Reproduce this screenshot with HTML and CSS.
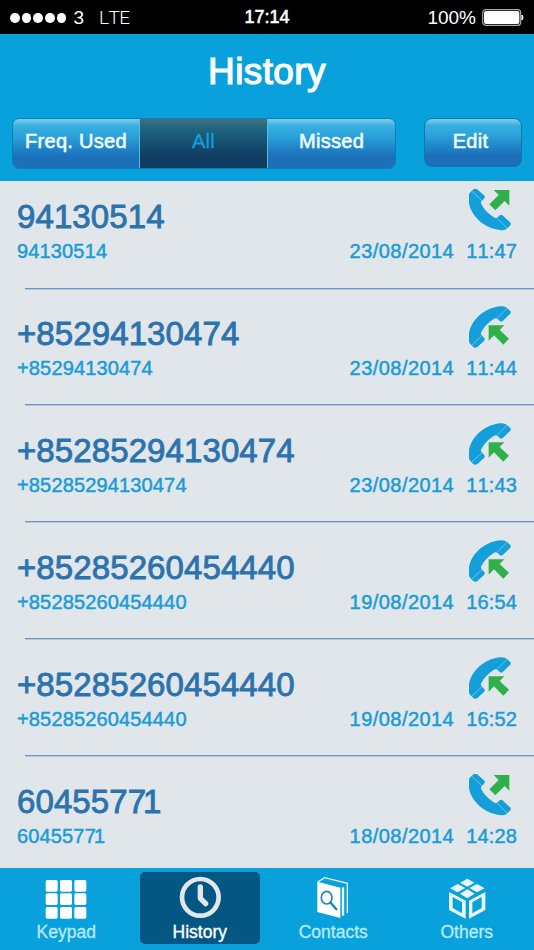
FILE: index.html
```
<!DOCTYPE html>
<html lang="en">
<head>
    <meta charset="UTF-8">
    <meta name="viewport" content="width=device-width, initial-scale=1.0">
    <title>History</title>
    <link rel="stylesheet" href="styles.css">
</head>
<body>
    <!-- shared call icons -->
    <svg class="defs" width="0" height="0">
        <symbol id="call-out" viewBox="0 0 126 126">
            <path fill="#149fda" d="M12 2Q19-4 26 2L45 19Q50 24 45 29L38 36Q34 40 37 46Q48 68 74 85Q81 90 86 85L92 79Q97 75 102 80L123 100Q128 105 123 110L113 119Q106 125 92 123C38 116-3 72-1 26Q-1 15 4 10Z"/>
            <path stroke="#9fd3ec" stroke-width="2" d="M9 7L39 35M84 87L114 117"/>
            <path fill="#2fb04a" d="M74 3H121V50L107 36L79 64L61 46L89 18Z"/>
        </symbol>
        <symbol id="call-in" viewBox="0 0 126 126">
            <path fill="#149fda" d="M12 122Q19 128 26 122L45 105Q50 100 45 95L38 88Q34 84 37 78Q48 56 74 39Q81 34 86 39L92 45Q97 49 102 44L123 24Q128 19 123 14L113 5Q106-1 92 1C38 8-3 52-1 98Q-1 109 4 114Z"/>
            <path stroke="#9fd3ec" stroke-width="2" d="M9 117L39 89M84 37L114 7"/>
            <path fill="#2fb04a" d="M59 58H106L92 72L120 98L103 116L75 88L59 104Z"/>
        </symbol>
    </svg>

    <div class="status-bar">
        <div class="signal">
            <i></i><i></i><i></i><i></i><i></i>
            <span class="carrier">3</span>
            <span class="network">LTE</span>
        </div>
        <div class="clock">17:14</div>
        <div class="power">
            <span>100%</span>
            <svg width="42" height="17" viewBox="0 0 42 17">
                <rect x=".7" y=".7" width="38" height="15.6" rx="3" fill="none" stroke="#aaa" stroke-width="1.2"/>
                <rect x="2" y="2" width="35.4" height="13" rx="2" fill="#fff"/>
                <path d="M40 6Q42 8.500 40 11Z" fill="#fff" stroke="#fff"/>
            </svg>
        </div>
    </div>

    <header>
        <h1>History</h1>
        <div class="toolbar">
            <div class="segments">
                <button class="segment">Freq. Used</button>
                <button class="segment selected">All</button>
                <button class="segment">Missed</button>
            </div>
            <button class="edit">Edit</button>
        </div>
    </header>

    <main>
        <div class="call">
            <div class="who">
                <div class="name">94130514</div>
                <div class="number">94130514</div>
            </div>
            <div class="when">
                <svg class="direction"><use href="#call-out"/></svg>
                <div class="stamp"><span class="date">23/08/2014</span><span>11:47</span></div>
            </div>
        </div>
        <div class="call">
            <div class="who">
                <div class="name">+85294130474</div>
                <div class="number">+85294130474</div>
            </div>
            <div class="when">
                <svg class="direction"><use href="#call-in"/></svg>
                <div class="stamp"><span class="date">23/08/2014</span><span>11:44</span></div>
            </div>
        </div>
        <div class="call">
            <div class="who">
                <div class="name">+85285294130474</div>
                <div class="number">+85285294130474</div>
            </div>
            <div class="when">
                <svg class="direction"><use href="#call-in"/></svg>
                <div class="stamp"><span class="date">23/08/2014</span><span>11:43</span></div>
            </div>
        </div>
        <div class="call">
            <div class="who">
                <div class="name">+85285260454440</div>
                <div class="number">+85285260454440</div>
            </div>
            <div class="when">
                <svg class="direction"><use href="#call-in"/></svg>
                <div class="stamp"><span class="date">19/08/2014</span><span>16:54</span></div>
            </div>
        </div>
        <div class="call">
            <div class="who">
                <div class="name">+85285260454440</div>
                <div class="number">+85285260454440</div>
            </div>
            <div class="when">
                <svg class="direction"><use href="#call-in"/></svg>
                <div class="stamp"><span class="date">19/08/2014</span><span>16:52</span></div>
            </div>
        </div>
        <div class="call">
            <div class="who">
                <div class="name">604557<span class="kern">7</span>1</div>
                <div class="number">604557<span class="kern">7</span>1</div>
            </div>
            <div class="when">
                <svg class="direction"><use href="#call-out"/></svg>
                <div class="stamp"><span class="date">18/08/2014</span><span>14:28</span></div>
            </div>
        </div>
    </main>

    <footer>
        <div class="tab">
            <svg width="44" height="44" viewBox="0 0 132 132" fill="#fff">
                <rect x="5" y="12" width="36" height="35" rx="5"/>
                <rect x="48" y="12" width="36" height="35" rx="5"/>
                <rect x="91" y="12" width="36" height="35" rx="5"/>
                <rect x="5" y="52" width="36" height="35" rx="5"/>
                <rect x="48" y="52" width="36" height="35" rx="5"/>
                <rect x="91" y="52" width="36" height="35" rx="5"/>
                <rect x="5" y="93" width="36" height="35" rx="5"/>
                <rect x="48" y="93" width="36" height="35" rx="5"/>
                <rect x="91" y="93" width="36" height="35" rx="5"/>
            </svg>
            <span>Keypad</span>
        </div>
        <div class="tab active">
            <svg width="44" height="44" viewBox="0 0 132 132" fill="none" stroke="#e2e7ec">
                <circle cx="67" cy="64" r="55" stroke-width="14"/>
                <path d="M67 33V67L83 83" stroke-width="16" stroke-linecap="round" stroke-linejoin="round"/>
            </svg>
            <span>History</span>
        </div>
        <div class="tab">
            <svg width="44" height="44" viewBox="0 0 132 132" fill="none">
                <path d="M19 17L88 35V126L19 108Z" fill="#fff"/>
                <path d="M20 18L41 5L109 22V111" stroke="#e6f7ff" stroke-width="4"/>
                <path d="M30 16L45 10L102 25L92 31Z" fill="#149fda"/>
                <path d="M96 34V119" stroke="#e6f7ff" stroke-width="7"/>
                <ellipse cx="47" cy="65" rx="16" ry="19" stroke="#1b87b5" stroke-width="5"/>
                <path d="M59 80L76 100" stroke="#1b87b5" stroke-width="7" stroke-linecap="round"/>
            </svg>
            <span>Contacts</span>
        </div>
        <div class="tab">
            <svg width="44" height="44" viewBox="0 0 132 132" fill="#e9f9ff">
                <path d="M67 8L88 20L67 32L45 20ZM38 24L61 36L38 49L15 37ZM96 24L119 37L96 49L73 36ZM67 40L89 53L67 67L45 53Z"/>
                <path fill-rule="evenodd" d="M12 48L62 74V128L12 102ZM23 63V96L51 112V79Z"/>
                <path fill-rule="evenodd" d="M121 48L72 74V128L121 102ZM110 63V96L82 112V79Z"/>
            </svg>
            <span>Others</span>
        </div>
    </footer>
</body>
</html>
```
FILE: styles.css
```
* {
    box-sizing: border-box;
}

body {
    font-family: "Liberation Sans", Arial, sans-serif;
    font-kerning: none;
    background-color: #e1e6eb;
    color: #fff;
    margin: 0;
    height: 950px;
    display: flex;
    flex-direction: column;
    overflow: hidden;
}

.defs {
    display: none;
}

.status-bar {
    display: grid;
    grid-template-columns: 1fr auto 1fr;
    align-items: center;
    height: 34px;
    flex: none;
    padding: 1px 10px 0 10px;
    background: #000;
    font-size: 18px;
}

.signal {
    display: flex;
    align-items: center;
    gap: 2px;
}

.signal i {
    width: 9.700px;
    height: 10px;
    border-radius: 50%;
    background: #fff;
}

.carrier {
    margin-left: 5px;
    font-size: 19px;
}

.network {
    margin-left: 13px;
    font-family: Roboto, sans-serif;
    font-weight: 300;
    font-size: 19px;
    letter-spacing: -0.6px;
}

.clock {
    -webkit-text-stroke: 0.6px #fff;
}

.power {
    display: flex;
    align-items: center;
    justify-content: flex-end;
    gap: 6px;
    font-size: 19px;
}

header {
    height: 147px;
    flex: none;
    background: #09a1dc;
}

h1 {
    margin: 0;
    padding-top: 13px;
    height: 84px;
    line-height: 50px;
    text-align: center;
    font-size: 37px;
    font-weight: normal;
    letter-spacing: 0.4px;
    -webkit-text-stroke: 1.2px #fff;
}

.toolbar {
    display: flex;
    justify-content: space-between;
    padding: 0 12px;
}

.segments {
    display: grid;
    grid-template-columns: 126px 128px 1fr;
    width: 384px;
    height: 51px;
    border: 1px solid #0b80b6;
    border-radius: 7px;
    overflow: hidden;
}

button {
    margin: 0;
    padding: 0 0 4px;
    border: none;
    color: #f2fbff;
    font-family: inherit;
    font-size: 20px;
    letter-spacing: 0.3px;
    -webkit-text-stroke: 0.6px;
    background: linear-gradient(#83cdec 0, #36afe0 14%, #2ba2db 35%, #1d7ec4 65%, #1c6fb8 80%, #1c70b9 100%);
}

.segment + .segment {
    border-left: 1px solid #55bce4;
}

.segment.selected {
    color: #159fd7;
    -webkit-text-stroke: 0.3px;
    background: linear-gradient(#44727f 0, #1e6480 20%, #174f71 50%, #103d63 75%, #103b61 100%);
}

.edit {
    width: 98px;
    height: 49px;
    border: 1px solid #0b78ae;
    border-radius: 8px;
    padding: 0 5px 2px 0;
}

main {
    flex: 1;
    min-height: 0;
    overflow: hidden;
}

.call {
    display: flex;
    justify-content: space-between;
    height: 117px;
    padding: 25px 17px 0;
    background: linear-gradient(#6d97c2 50%, #b4c8dc 50%) 25px 100% / 100% 2px no-repeat;
}

/* the first row sits tighter under the header */
.call:first-child {
    height: 109px;
    padding-top: 16px;
}

.call:nth-child(2) {
    margin-top: -1px;
}

.call:last-child {
    background: none;
}

.name {
    height: 40px;
    line-height: 40px;
    font-size: 33px;
    letter-spacing: 0.1px;
    color: #2c73ae;
    -webkit-text-stroke: 0.9px;
}

.number,
.stamp {
    height: 24px;
    margin-top: 2px;
    line-height: 24px;
    font-size: 20px;
    letter-spacing: 0.15px;
    color: #1b9cd5;
    -webkit-text-stroke: 0.5px;
}

.kern {
    letter-spacing: -0.09em;
}

.when {
    display: flex;
    flex-direction: column;
    align-items: flex-end;
    margin-top: -8px;
}

.direction {
    width: 42px;
    height: 42px;
    margin-right: 6px;
    overflow: visible;
}

.stamp {
    display: flex;
    gap: 12px;
    margin-top: 8px;
}

.date {
    letter-spacing: 0.45px;
}

footer {
    display: grid;
    grid-template-columns: repeat(4, 1fr);
    height: 82px;
    flex: none;
    padding-top: 4px;
    background: #09a1dc;
}

.tab {
    display: flex;
    flex-direction: column;
    align-items: center;
    width: 120px;
    height: 72px;
    margin: 0 auto;
    padding: 4px 1px 0 0;
    border-radius: 5px;
    color: #b5e9fb;
    font-size: 17.500px;
    -webkit-text-stroke: 0.35px;
}

.tab span {
    line-height: 24px;
}

.tab.active {
    background: #045783;
    color: #fff;
}
```
